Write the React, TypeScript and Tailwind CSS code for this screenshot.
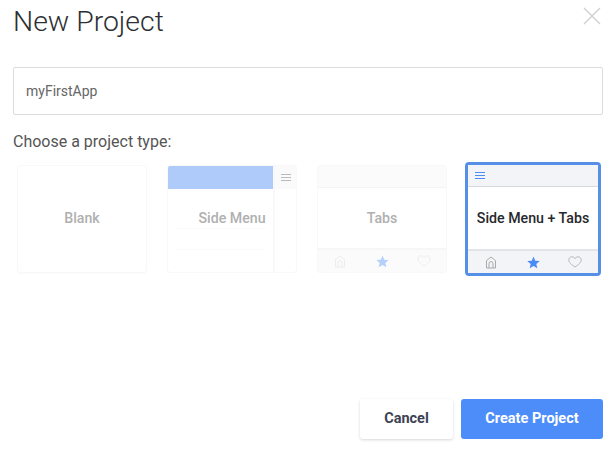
const font = "font-['Roboto',sans-serif]";

function Bars({ className }: { className: string }) {
  return (
    <div className={`flex flex-col gap-[2px] w-[10px] ${className}`}>
      <div className="h-[1px] bg-current" />
      <div className="h-[1px] bg-current" />
      <div className="h-[1px] bg-current" />
    </div>
  );
}

function HomeIcon({ className }: { className: string }) {
  return (
    <svg viewBox="0 0 12 13" className={`w-[12px] h-[13px] ${className}`} fill="none" stroke="currentColor" strokeWidth="1">
      <path d="M1.5 12V4.6L6 1l4.5 3.6V12z" />
      <path d="M4 12V7.6a2 2 0 0 1 4 0V12" />
    </svg>
  );
}

function StarIcon({ className }: { className: string }) {
  return (
    <svg viewBox="0 0 24 24" className={`w-[13px] h-[13px] ${className}`} fill="currentColor">
      <path d="M12 1l3.2 7.6 8.3.7-6.3 5.4 1.9 8.1L12 18.5l-7.1 4.3 1.9-8.1L.5 9.3l8.3-.7z" />
    </svg>
  );
}

function HeartIcon({ className }: { className: string }) {
  return (
    <svg viewBox="0 0 14 12" className={`w-[14px] h-[12px] ${className}`} fill="none" stroke="currentColor" strokeWidth="0.9">
      <path d="M7 11C3 8.4.8 6.4.8 3.9.8 2.1 2.2.8 3.9.8 5.2.8 6.4 1.5 7 2.6 7.6 1.5 8.8.8 10.100.8c1.700 0 3.100 1.300 3.100 3.100C13.200 6.400 11 8.400 7 11z" />
    </svg>
  );
}

function TabIcons({ faded }: { faded?: boolean }) {
  return (
    <div className={`h-[24px] flex items-center justify-center ${faded ? "bg-[#fbfbfc] border-t-2 border-[#f6f6f7]" : "bg-[#f3f4f7] border-t-2 border-[#e3e4e7]"}`}>
      <div className="w-[42px] flex justify-center">
        <HomeIcon className={faded ? "text-[#ececec]" : "text-[#a8a8a8]"} />
      </div>
      <div className="w-[42px] flex justify-center">
        <StarIcon className={faded ? "text-[#b5d0fb]" : "text-[#4a8bf5]"} />
      </div>
      <div className="w-[42px] flex justify-center">
        <HeartIcon className={faded ? "text-[#ececec]" : "text-[#b0b0b0]"} />
      </div>
    </div>
  );
}

export default function App() {
  return (
    <div className={`w-[616px] h-[452px] bg-white flex flex-col px-[13px] relative overflow-hidden ${font}`}>
      <svg viewBox="0 0 18 18" className="absolute left-[583px] top-[7px] w-[18px] h-[18px] text-[#d0d0d0]" fill="none" stroke="currentColor" strokeWidth="1.300">
        <path d="M1 1l16 16M17 1L1 17" />
      </svg>
      <h1 className="text-[28.4px] leading-[34px] mt-[5px] font-light text-[#2d2f33]">New Project</h1>

      <div className="mt-[28px] h-[48px] w-[590px] border border-[#dcdcdc] rounded-[2px] flex items-center px-[12px] text-[14px] text-[#666666]">
        myFirstApp
      </div>

      <div className="mt-[17px] text-[16px] leading-[20px] text-[#555555]">Choose a project type:</div>

      <div className="mt-[10px] flex items-center pl-[4px]">
        {/* Blank */}
        <div className="w-[130px] h-[108px] rounded-[3px] border border-[#f8f8f8] shadow-[0_1px_2px_rgba(0,0,0,0.02)] flex items-center justify-center text-[14.2px] font-medium text-[#b0b0b0]">
          Blank
        </div>

        {/* Side Menu */}
        <div className="ml-[20px] w-[130px] h-[108px] rounded-[3px] border border-[#f8f8f8] flex overflow-hidden relative">
          <div className="w-[107px] flex flex-col border-r-2 border-[#f8f8f9]">
            <div className="h-[23px] bg-[#aecbfa]" />
            <div className="flex-1 flex flex-col px-[7px]">
              <div className="h-[40px] border-b border-[#fafafa]" />
              <div className="h-[21px] border-b border-[#fafafa]" />
            </div>
          </div>
          <div className="flex-1 flex flex-col">
            <div className="h-[23px] bg-[#fafafb] flex items-center justify-center">
              <Bars className="text-[#bbbbbb]" />
            </div>
          </div>
          <div className="absolute inset-0 flex items-center justify-center whitespace-nowrap text-[14.2px] font-medium text-[#b0b0b0]">
            Side Menu
          </div>
        </div>

        {/* Tabs */}
        <div className="ml-[20px] w-[130px] h-[108px] rounded-[3px] border border-[#f8f8f8] flex flex-col overflow-hidden">
          <div className="h-[22px] bg-[#fbfbfc] border-b border-[#f4f4f5]" />
          <div className="flex-1 pt-[1px] flex items-center justify-center text-[14.2px] font-medium text-[#b0b0b0]">Tabs</div>
          <TabIcons faded />
        </div>

        {/* Side Menu + Tabs */}
        <div className="ml-[18px] w-[136px] h-[114px] rounded-[4px] border-[3px] border-[#5590e6] flex flex-col overflow-hidden">
          <div className="h-[22px] bg-[#f3f4f7] border-b border-[#d8d9dc] flex items-center pl-[7px]">
            <Bars className="text-[#4a8bf5]" />
          </div>
          <div className="flex-1 pt-[1px] flex items-center justify-center whitespace-nowrap text-[14.2px] font-medium text-[#26282c]">
            Side Menu + Tabs
          </div>
          <TabIcons />
        </div>
      </div>

      <div className="absolute right-[13px] top-[399px] flex gap-[8px]">
        <button className="w-[93px] h-[40px] rounded-[3px] bg-white shadow-[0_1px_3px_rgba(0,0,0,0.16)] text-[14.5px] font-bold text-[#3d4354]">Cancel</button>
        <button className="w-[142px] h-[40px] rounded-[3px] bg-[#4c8dfa] text-[14.5px] font-bold text-white">Create Project</button>
      </div>
    </div>
  );
}
